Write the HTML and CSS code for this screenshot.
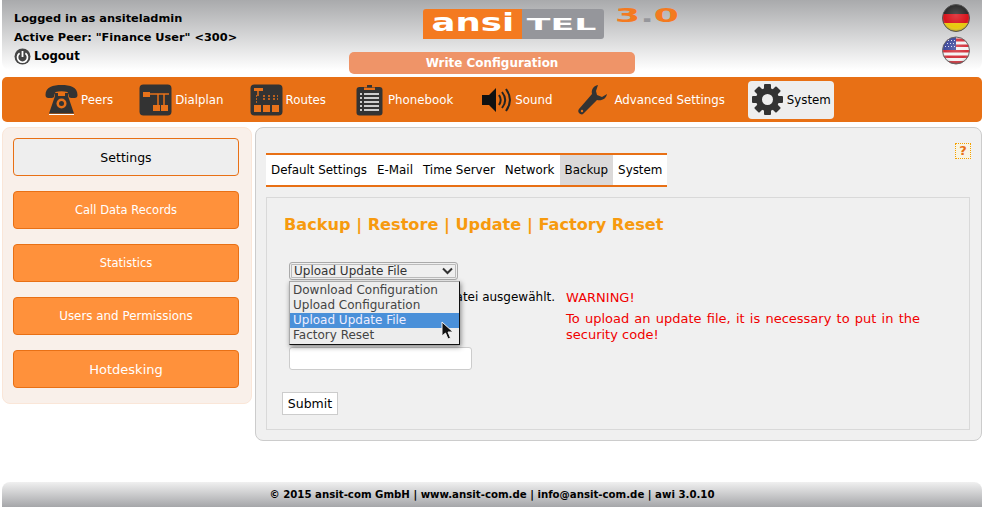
FILE: index.html
```html
<!DOCTYPE html>
<html>
<head>
    <meta charset="utf-8">
    <title>ansitel awi</title>
    <link rel="stylesheet" href="styles.css">
</head>
<body>
    <div class="header">
        <div class="user-info">
            <div>Logged in as ansiteladmin</div>
            <div>Active Peer: "Finance User" &lt;300&gt;</div>
            <div class="logout">
                <svg width="17" height="17" viewBox="0 0 17 17"><circle cx="8.500" cy="8.500" r="8" fill="#444"/><path d="M5.600 5.200a5 5 0 1 0 5.800 0" fill="none" stroke="#fff" stroke-width="1.700"/><path d="M8.500 3v6" stroke="#fff" stroke-width="1.800"/></svg>
                <span>Logout</span>
            </div>
        </div>
        <div class="header-center">
            <div class="logo-row">
                <div class="logo">
                    <span class="logo-ansi"><span>ansi</span></span><span class="logo-tel"><span>TEL</span></span>
                </div>
                <div class="logo-version">3<span>.</span>0</div>
            </div>
            <div class="write-config">Write Configuration</div>
        </div>
        <div class="flags">
            <svg width="28" height="28" viewBox="0 0 28 28">
                <defs>
                    <clipPath id="ball"><circle cx="14" cy="14" r="13.500"/></clipPath>
                    <radialGradient id="shine" cx=".5" cy=".4" r=".62">
                        <stop offset="0" stop-color="#fff" stop-opacity=".18"/>
                        <stop offset=".7" stop-color="#fff" stop-opacity="0"/>
                        <stop offset="1" stop-color="#000" stop-opacity=".45"/>
                    </radialGradient>
                </defs>
                <g clip-path="url(#ball)">
                    <rect width="28" height="10" fill="#2a2a2a"/>
                    <rect y="10" width="28" height="9" fill="#d8141c"/>
                    <rect y="19" width="28" height="9" fill="#e8c80c"/>
                    <rect width="28" height="28" fill="url(#shine)"/>
                </g>
                <circle cx="14" cy="14" r="13.500" fill="none" stroke="#555"/>
            </svg>
            <svg width="28" height="29" viewBox="0 0 28 28">
                <g clip-path="url(#ball)">
                    <rect width="28" height="28" fill="#f4f4f4"/>
                    <path d="M0 2h28v3H0zM0 8h28v2.500H0zM0 13.500h28v2.500H0zM0 19h28v2.500H0zM0 24.500h28v3.500H0z" fill="#d4323c"/>
                    <rect width="14" height="13.500" fill="#3f4a9c"/>
                    <path d="M3 4h1M6 4h1M9 4h1M12 4h1M2 7h1M5 7h1M8 7h1M11 7h1M3 10h1M6 10h1M9 10h1M12 10h1" stroke="#dde" stroke-width="1"/>
                    <rect width="28" height="28" fill="url(#shine)"/>
                </g>
                <circle cx="14" cy="14" r="13.500" fill="none" stroke="#666"/>
            </svg>
        </div>
    </div>

    <div class="nav">
        <a class="nav-item nav-peers">
            <svg width="33" height="31" viewBox="0 0 33 31"><path d="M.5 11C.5 3 8 1 16.500 1S32.500 3 32.500 11c0 2-1 3-3 3h-3c-2 0-3-1-3-3.500l-1-2.500c-4-1-8-1-12 0l-1 2.500c0 2.500-1 3.500-3 3.500h-3c-2 0-3-1-3-3z" fill="#333"/><path d="M10 9h3v3h7V9h3v3l6 17.500H4l6-17.500z" fill="#333"/><circle cx="16.500" cy="19.500" r="5" fill="#e8721a"/><circle cx="16.500" cy="19.500" r="2.500" fill="#333"/><path d="M4 30.500h25" stroke="#fff" stroke-width="1"/></svg>
            <span>Peers</span>
        </a>
        <a class="nav-item nav-dialplan">
            <svg width="33" height="32" viewBox="0 0 33 32"><rect x=".5" y=".5" width="32" height="31" rx="4" fill="#333"/><rect x="4" y="8" width="7" height="5" fill="#e8721a"/><path d="M11 10h19M19 10v11M25 10v11" stroke="#e8721a" stroke-width="1.500" fill="none"/><rect x="14" y="21" width="7" height="6" fill="#e8721a"/><rect x="22" y="21" width="7" height="6" fill="#e8721a"/></svg>
            <span>Dialplan</span>
        </a>
        <a class="nav-item nav-routes">
            <svg width="33" height="32" viewBox="0 0 33 32"><rect x=".5" y=".5" width="32" height="31" rx="4" fill="#333"/><rect x="4" y="4" width="9" height="3" fill="#e8721a"/><path d="M8 7v5" stroke="#e8721a" stroke-width="1.500"/><path d="M6 12h1M6 15h1M6 18h1M13 12h2M18 12h2M23 12h2M27 12h1M13 15h2M18 15h2M23 15h2M27 15h1" stroke="#e8721a" stroke-width="1.500" fill="none"/><rect x="4" y="21" width="7" height="7" fill="#e8721a"/><rect x="13" y="21" width="7" height="7" fill="#e8721a"/><rect x="22" y="21" width="7" height="7" fill="#e8721a"/></svg>
            <span>Routes</span>
        </a>
        <a class="nav-item nav-phonebook">
            <svg width="27" height="32" viewBox="0 0 27 32"><rect x=".5" y="3" width="26" height="28.500" rx="3" fill="#333"/><rect x="8" y="3.500" width="11" height="2.500" fill="#e8721a"/><path d="M11 1h5v2.500h-5z" fill="#333"/><path d="M4 10h2M8 10h15M4 14h2M8 14h15M4 18h2M8 18h15M4 22h2M8 22h15M4 26h2M8 26h15" stroke="#fff" stroke-width="1.500"/></svg>
            <span>Phonebook</span>
        </a>
        <a class="nav-item nav-sound">
            <svg width="30" height="26" viewBox="0 0 30 26"><path d="M1 8h7l7-7v24l-7-7H1z" fill="#111"/><path d="M18 8c2 3 2 7 0 10M21 5c4 5 4 11 0 16M25 2c5 7 5 15 0 22" fill="none" stroke="#222" stroke-width="2"/></svg>
            <span>Sound</span>
        </a>
        <a class="nav-item nav-advanced">
            <svg width="30" height="31" viewBox="0 0 30 31"><path d="M20 1c-5 1-7 5-6 9L1 25c-1 1-1 3 0 4s3 2 4 1l14-14c5 1 9-1 10-6l-5 3-5-2-1-4z" fill="#333"/><circle cx="4" cy="27" r="1.200" fill="#e8721a"/></svg>
            <span>Advanced Settings</span>
        </a>
        <a class="nav-item nav-system">
            <svg width="31" height="31" viewBox="0 0 31 31"><g fill="#333"><rect x="12" y="0" width="7" height="31" rx="1"/><rect x="12" y="0" width="7" height="31" rx="1" transform="rotate(45 15.500 15.500)"/><rect x="12" y="0" width="7" height="31" rx="1" transform="rotate(90 15.500 15.500)"/><rect x="12" y="0" width="7" height="31" rx="1" transform="rotate(135 15.500 15.500)"/><circle cx="15.500" cy="15.500" r="11.500"/></g><circle cx="15.500" cy="15.500" r="5.500" fill="#eee"/></svg>
            <span>System</span>
        </a>
    </div>

    <div class="content">
        <div class="sidebar">
            <a class="side-btn active">Settings</a>
            <a class="side-btn narrow">Call Data Records</a>
            <a class="side-btn narrow">Statistics</a>
            <a class="side-btn">Users and Permissions</a>
            <a class="side-btn wide">Hotdesking</a>
        </div>
        <div class="main">
            <div class="help">?</div>
            <div class="tabs">
                <a>Default Settings</a>
                <a>E-Mail</a>
                <a>Time Server</a>
                <a>Network</a>
                <a class="active">Backup</a>
                <a>System</a>
            </div>
            <div class="panel">
                <h2>Backup | Restore | Update | Factory Reset</h2>
                <div class="form-row">
                    <div class="form-left">
                        <div class="select-box">
                            <span>Upload Update File</span>
                            <svg width="11" height="8" viewBox="0 0 11 8"><path d="M1 1.500l4.500 4.500 4.500-4.500" fill="none" stroke="#333" stroke-width="2"/></svg>
                        </div>
                        <div class="file-line">Keine Datei ausgewählt.</div>
                        <input class="code-input" type="text">
                    </div>
                    <div class="warning">
                        <p>WARNING!</p>
                        <p>To upload an update file, it is necessary to put in the security code!</p>
                    </div>
                </div>
                <button class="submit">Submit</button>

                <ul class="dropdown">
                    <li>Download Configuration</li>
                    <li>Upload Configuration</li>
                    <li class="hover">Upload Update File</li>
                    <li>Factory Reset</li>
                </ul>
                <svg class="cursor" width="13" height="19" viewBox="0 0 13 19"><path d="M1 1v14l3.500-3 2.500 6 2.500-1-2.500-6h5z" fill="#111" stroke="#eee" stroke-width="1"/></svg>
            </div>
        </div>
    </div>

    <div class="footer">© 2015 ansit-com GmbH | www.ansit-com.de | info@ansit-com.de | awi 3.0.10</div>
</body>
</html>
```

FILE: styles.css
```css
body {
    margin: 0;
    padding: 0 5px 0 2px;
    box-sizing: border-box;
    height: 507px;
    overflow: hidden;
    background-color: #fff;
    color: #000;
    font-family: "DejaVu Sans", sans-serif;
    font-size: 12px;
    display: flex;
    flex-direction: column;
}

/* header */
.header {
    height: 70px;
    flex: none;
    display: flex;
    background: linear-gradient(#a9aaac, #ffffff);
    border-radius: 0 0 8px 8px;
}

.user-info {
    width: 340px;
    flex: none;
    padding: 9px 0 0 12px;
    box-sizing: border-box;
    font-size: 11.350px;
    font-weight: bold;
    line-height: 19px;
    white-space: nowrap;
}

.logout {
    display: flex;
    align-items: center;
    gap: 3px;
    font-size: 11.700px;
}

.header-center {
    width: 345px;
    flex: none;
}

.logo-row {
    display: flex;
    height: 52px;
    padding: 9px 0 0 81px;
    box-sizing: border-box;
}

.logo {
    display: flex;
    width: 181px;
    height: 30px;
    font-weight: bold;
    color: #fff;
}

.logo-ansi,
.logo-tel {
    display: flex;
    align-items: center;
    justify-content: center;
    overflow: hidden;
}

.logo-ansi {
    width: 99px;
    background-color: #f47a20;
    border-radius: 3px 0 0 0;
    font-size: 24px;
    line-height: 24px;
}

.logo-ansi span {
    transform: translateY(-1px) scale(1.480, 1);
}

.logo-tel {
    width: 82px;
    background-color: #95969b;
    border-radius: 0 3px 3px 0;
    font-size: 16.500px;
}

.logo-tel span {
    transform: translateX(-1px) scale(2.100, 1);
}

.logo-version {
    margin: -3px 0 0 11px;
    height: 19px;
    font-size: 19px;
    font-weight: bold;
    line-height: 19px;
    color: #f47a20;
    transform: scale(1.900, 1);
    transform-origin: left center;
}

.logo-version span {
    color: #95969b;
}

.write-config {
    height: 22px;
    width: 286px;
    margin-left: 7px;
    background-color: #ef9468;
    color: #fff;
    border-radius: 5px;
    font-size: 11.950px;
    font-weight: bold;
    line-height: 23px;
    text-align: center;
}

.flags {
    width: 40px;
    flex: none;
    margin-left: auto;
    padding-top: 4px;
    display: flex;
    flex-direction: column;
    gap: 4px;
}

/* top nav */
.nav {
    height: 45px;
    flex: none;
    margin-top: 7px;
    background-color: #e87015;
    border-radius: 5px;
    display: flex;
    align-items: center;
    color: #fff;
    font-size: 11.800px;
    padding-left: 43px;
}

.nav-item {
    display: flex;
    align-items: center;
    gap: 3px;
    height: 38px;
    white-space: nowrap;
}

.nav-dialplan { margin-left: 26px; }
.nav-routes { margin-left: 26px; }
.nav-phonebook { margin-left: 30px; gap: 5px; }
.nav-sound { margin-left: 28px; gap: 4px; }
.nav-advanced { margin-left: 26px; gap: 6px; }

.nav-system {
    margin-left: 23px;
    background-color: #eeeeee;
    color: #000;
    border-radius: 4px;
    padding: 0 3px 0 4px;
    gap: 4px;
}

/* content */
.content {
    flex: 1;
    display: flex;
    align-items: flex-start;
    gap: 3px;
    margin-top: 5px;
}

.sidebar {
    width: 250px;
    height: 277px;
    flex: none;
    box-sizing: border-box;
    padding: 10px 12px 10px 10px;
    background-color: #f9f0ea;
    border: 1px solid #fae6d8;
    border-radius: 8px;
    display: flex;
    flex-direction: column;
    gap: 15px;
}

.side-btn {
    height: 38px;
    box-sizing: border-box;
    background-color: #ff913b;
    border: 1px solid #e87015;
    border-radius: 4px;
    color: #fff;
    font-size: 11.900px;
    line-height: 37px;
    text-align: center;
}

.side-btn.narrow {
    font-size: 11.500px;
}

.side-btn.wide {
    font-size: 13px;
}

.side-btn.active {
    background-color: #eeeeee;
    color: #000;
    font-size: 12.500px;
}

.main {
    flex: 1;
    height: 314px;
    box-sizing: border-box;
    padding: 25px 11px 11px 10px;
    background-color: #f0f0f0;
    border: 1px solid #cccccc;
    border-radius: 8px;
    position: relative;
}

.help {
    position: absolute;
    top: 15px;
    right: 10px;
    width: 16px;
    height: 16px;
    box-sizing: border-box;
    border: 1px dotted #f3a000;
    background-color: #f8f4e4;
    color: #e87015;
    font-size: 13px;
    font-weight: bold;
    line-height: 14px;
    text-align: center;
}

.tabs {
    display: inline-flex;
    vertical-align: top;
    background-color: #fff;
    border-top: 2px solid #e87015;
    border-bottom: 2px solid #e87015;
    font-size: 11.900px;
    line-height: 30px;
}

.tabs a {
    padding: 0 5px;
}

.tabs a.active {
    background-color: #dbd9d9;
}

.panel {
    height: 233px;
    box-sizing: border-box;
    margin-top: 10px;
    padding: 15px 15px 0;
    border: 1px solid #d9d9d9;
    position: relative;
}

.panel h2 {
    margin: 0 0 0 2px;
    color: #f79a0e;
    font-size: 16.150px;
    font-weight: bold;
    line-height: 24px;
}

.form-row {
    display: flex;
    margin-top: 25px;
}

.form-left {
    width: 284px;
    flex: none;
    padding-left: 7px;
    box-sizing: border-box;
}

.select-box {
    width: 169px;
    height: 18px;
    box-sizing: border-box;
    background-color: #efefef;
    border: 1px solid #aaa;
    box-shadow: inset 0 0 0 1px #efefef, inset 0 0 0 2px #bbb;
    border-radius: 3px;
    display: flex;
    align-items: center;
    justify-content: space-between;
    padding: 0 4px;
    font-size: 12px;
    color: #333;
}

.file-line {
    width: 266px;
    height: 62px;
    padding-top: 9px;
    box-sizing: border-box;
    text-align: right;
    font-size: 12px;
    line-height: 16px;
    white-space: nowrap;
}

.code-input {
    display: block;
    width: 183px;
    height: 23px;
    box-sizing: border-box;
    margin: 5px 0 0;
    background-color: #fff;
    border: 1px solid #ccc;
    border-radius: 3px;
}

.warning {
    width: 354px;
    margin-top: 28px;
    color: #f00000;
    font-size: 13px;
    line-height: 16px;
    text-align: justify;
}

.warning p {
    margin: 0 0 5px;
}

.submit {
    display: block;
    margin-top: 22px;
    width: 56px;
    height: 23px;
    padding: 0;
    background-color: #fff;
    border: 1px solid #ccc;
    font-family: inherit;
    font-size: 12.500px;
    color: #000;
}

.dropdown {
    position: absolute;
    left: 22px;
    top: 83px;
    width: 171px;
    margin: 0;
    padding: 1px 0;
    box-sizing: border-box;
    list-style: none;
    background-color: #ededed;
    border: 1px solid #111;
    border-top-color: #aaa;
    border-left-color: #aaa;
    box-shadow: 1px 2px 5px rgba(0, 0, 0, 0.45);
    color: #444;
    font-size: 12px;
    line-height: 15px;
}

.dropdown li {
    padding-left: 3px;
}

.dropdown li.hover {
    background-color: #4a90d9;
    color: #eef;
}

.cursor {
    position: absolute;
    left: 174px;
    top: 123px;
}

/* footer */
.footer {
    height: 25px;
    flex: none;
    background: linear-gradient(#f0f0f0, #a5a6a9);
    border-radius: 8px 8px 0 0;
    font-size: 10.200px;
    font-weight: bold;
    line-height: 26px;
    text-align: center;
}
```
